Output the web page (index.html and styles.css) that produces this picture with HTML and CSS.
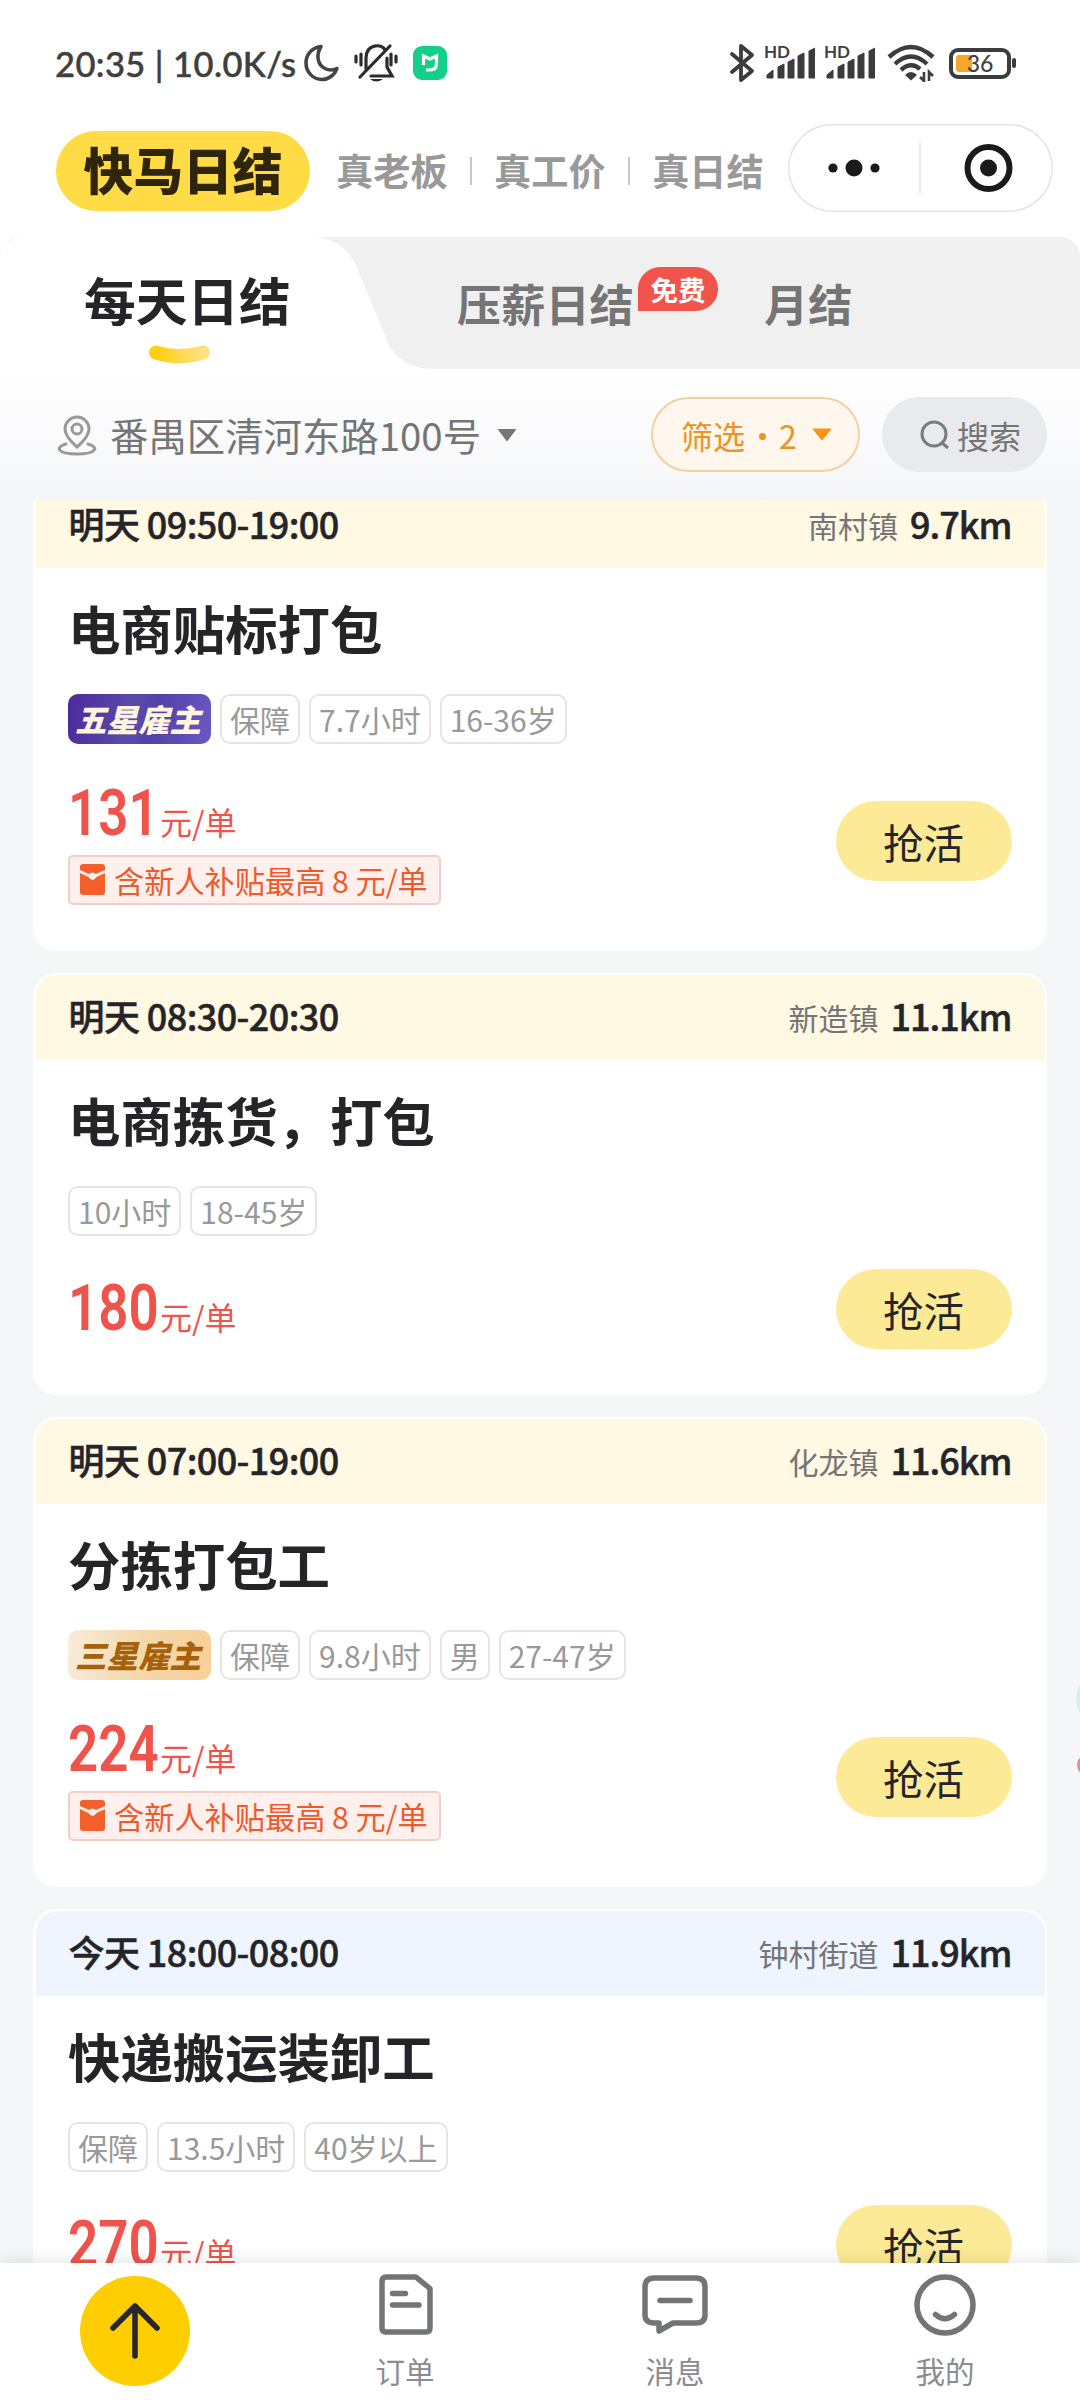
FILE: index.html
```html
<!DOCTYPE html>
<html lang="zh-CN">
<head>
<meta charset="utf-8">
<title>快马日结</title>
<link rel="stylesheet" href="styles.css">
</head>
<body>
<svg class="defs" width="0" height="0">
  <symbol id="envelope" viewBox="0 0 25 31">
    <path d="M3 0H22Q25 0 25 3V6L16 10Q12.500 7 9 10L0 6V3Q0 0 3 0z" fill="#f4602c"/>
    <path d="M0 9L8.500 13Q12.500 19 16.500 13L25 9V28Q25 31 22 31H3Q0 31 0 28z" fill="#f4602c"/>
  </symbol>
</svg>
<div class="screen">
  <header class="status">
    <span class="clock">20:35 | 10.0K/s</span>
    <svg class="moon" width="36" height="38" viewBox="0 0 36 38"><path d="M17 2.500C7 4 2 11 2 19c0 9 7 16.500 16 16.500 7 0 13-5 15-11-4 2-8 2-12 0-8-4-9-14-4-22z" fill="none" stroke="#444" stroke-width="3.600" stroke-linejoin="round"/></svg>
    <svg class="bell" width="44" height="40" viewBox="0 0 44 40"><g fill="none" stroke="#2c2c2c" stroke-width="3.200" stroke-linecap="round"><path d="M12 26V15C12 1 28 0 31 7M36 3L6 34M33 15V24L38 33H17M2 13V19M7 11V22M37 11V22M42 13V19"/></g><path d="M16 36H29Q22 41 16 36z" fill="#2c2c2c"/></svg>
    <svg class="mi" width="34" height="34" viewBox="0 0 34 34"><rect width="34" height="34" rx="9" fill="#14cf8c"/><path d="M10.500 19V10L17 13L23.500 10V18Q23.500 24 17 24H13" fill="none" stroke="#fff" stroke-width="3.200"/></svg>
    <span class="grow"></span>
    <svg class="bt" width="26" height="40" viewBox="0 0 26 40"><path d="M3 11L23 28 12 37V3L23 12 3 29" fill="none" stroke="#3c3c3c" stroke-width="3.800" stroke-linejoin="round" stroke-linecap="round"/></svg>
    <span class="sim"><b>HD</b><svg width="50" height="36" viewBox="0 0 50 36"><path d="M2 33V30L8 25V33zM13 33V22L19 19V33zM23 33V17L29 14V33zM33 33V11L39 8V33zM44 33V6L50 3V33z" fill="#3c3c3c" stroke="#3c3c3c" stroke-linejoin="round"/></svg></span>
    <span class="sim"><b>HD</b><svg width="50" height="36" viewBox="0 0 50 36"><path d="M2 33V30L8 25V33zM13 33V22L19 19V33zM23 33V17L29 14V33zM33 33V11L39 8V33zM44 33V6L50 3V33z" fill="#3c3c3c" stroke="#3c3c3c" stroke-linejoin="round"/></svg></span>
    <svg class="wifi" width="48" height="38" viewBox="0 0 48 38"><g fill="none" stroke="#3c3c3c" stroke-width="4.400"><path d="M2 13Q24 -7 46 13M8 20Q24 5 40 20M14 26Q24 17 33 25"/></g><path d="M18 31Q24 25 30 31L24 36.500z" fill="#3c3c3c"/><path d="M33 33L37 37V28M46 32L42 28V37" fill="none" stroke="#3c3c3c" stroke-width="2.600"/></svg>
    <span class="battery"><i></i><em>36</em></span>
  </header>

  <div class="brand">
    <div class="logo">快马日结</div>
    <div class="slogans"><span>真老板</span><i></i><span>真工价</span><i></i><span>真日结</span></div>
    <div class="capsule">
      <svg width="265" height="88" viewBox="0 0 265 88"><g fill="#1a1a1a"><circle cx="45" cy="44" r="4.600"/><circle cx="66" cy="44" r="8.500"/><circle cx="87" cy="44" r="4.600"/><circle cx="200.500" cy="44" r="8.500"/></g><path d="M132 18V69" stroke="#e4e4e4" stroke-width="1.500"/><circle cx="200.500" cy="44" r="21" fill="none" stroke="#1a1a1a" stroke-width="6"/></svg>
    </div>
  </div>

  <nav class="tabs">
    <svg class="tab-shape" width="440" height="132" viewBox="0 0 440 132"><path d="M0 132V18Q3 3 20 0H315C338 2 350 14 357 31L388 106Q399 130 431 132z" fill="#fff"/></svg>
    <div class="tab active">每天日结<svg width="61" height="21" viewBox="0 0 61 21"><defs><linearGradient id="smile"><stop offset="0" stop-color="#ffcf10"/><stop offset="1" stop-color="#ffe183"/></linearGradient></defs><path d="M7 7.500Q30 15 54 7.500" fill="none" stroke="url(#smile)" stroke-width="14" stroke-linecap="round"/></svg></div>
    <div class="tab second">压薪日结<span class="free">免费</span></div>
    <div class="tab third">月结</div>
  </nav>

  <div class="filters">
    <svg class="pin" width="40" height="41" viewBox="0 0 40 41"><g fill="none" stroke="#999" stroke-width="3"><path d="M20 32C12 25 8 20 8 14a12 12 0 0 1 24 0C32 20 28 25 20 32z"/><circle cx="20" cy="14" r="5"/><path d="M9 29C-2 32 0 39 20 39S42 32 31 29" stroke-linecap="round"/></g></svg>
    <span class="address">番禺区清河东路100号</span>
    <svg class="caret" width="20" height="13" viewBox="0 0 20 13"><path d="M1 0H19L10 12z" fill="#777" stroke="#777" stroke-linejoin="round"/></svg>
    <span class="grow"></span>
    <div class="pill filter"><span>筛选</span><i></i><span>2</span><svg width="20" height="13" viewBox="0 0 20 13"><path d="M1 1H19L10 12z" fill="#fa9314" stroke="#fa9314" stroke-linejoin="round"/></svg></div>
    <div class="pill search"><svg width="30" height="30" viewBox="0 0 30 30"><g fill="none" stroke="#7a7b80" stroke-width="3"><circle cx="14" cy="14" r="12"/><path d="M21 22L28 28"/></g></svg><span>搜索</span></div>
  </div>

  <main class="list">
    <article class="card cut">
      <div class="head"><b class="time">明天 09:50-19:00</b><span class="place">南村镇</span><b class="km">9.7km</b></div>
      <div class="body">
        <h2>电商贴标打包</h2>
        <div class="tags"><span class="star five">五星雇主</span><span>保障</span><span>7.7小时</span><span>16-36岁</span></div>
        <div class="foot"><div class="pay"><div class="price"><span class="num"><b>131</b></span>元/单</div><div class="bonus"><svg width="25" height="31"><use href="#envelope"/></svg>含新人补贴最高 8 元/单</div></div><div class="grab">抢活</div></div>
      </div>
    </article>
    <article class="card">
      <div class="head"><b class="time">明天 08:30-20:30</b><span class="place">新造镇</span><b class="km">11.1km</b></div>
      <div class="body">
        <h2>电商拣货，打包</h2>
        <div class="tags"><span>10小时</span><span>18-45岁</span></div>
        <div class="foot short"><div class="price"><span class="num"><b>180</b></span>元/单</div><div class="grab">抢活</div></div>
      </div>
    </article>
    <article class="card">
      <div class="head"><b class="time">明天 07:00-19:00</b><span class="place">化龙镇</span><b class="km">11.6km</b></div>
      <div class="body">
        <h2>分拣打包工</h2>
        <div class="tags"><span class="star three">三星雇主</span><span>保障</span><span>9.8小时</span><span>男</span><span>27-47岁</span></div>
        <div class="foot"><div class="pay"><div class="price"><span class="num"><b>224</b></span>元/单</div><div class="bonus"><svg width="25" height="31"><use href="#envelope"/></svg>含新人补贴最高 8 元/单</div></div><div class="grab">抢活</div></div>
      </div>
    </article>
    <article class="card today">
      <div class="head"><b class="time">今天 18:00-08:00</b><span class="place">钟村街道</span><b class="km">11.9km</b></div>
      <div class="body">
        <h2>快递搬运装卸工</h2>
        <div class="tags"><span>保障</span><span>13.5小时</span><span>40岁以上</span></div>
        <div class="foot short"><div class="price"><span class="num"><b>270</b></span>元/单</div><div class="grab">抢活</div></div>
      </div>
    </article>
  </main>

  <div class="floater"><i class="mint"></i><i class="rose"></i></div>

  <footer class="nav">
    <div class="item"><svg class="up" width="110" height="110" viewBox="0 0 110 110"><circle cx="55" cy="55" r="55" fill="#ffce00"/><path d="M55 80V30M33 52L55 30L77 52" fill="none" stroke="#26262b" stroke-width="5.600" stroke-linecap="round" stroke-linejoin="round"/></svg></div>
    <div class="item"><svg width="66" height="64" viewBox="0 0 66 64"><g fill="none" stroke="#737477" stroke-width="5.500" stroke-linejoin="round" stroke-linecap="round"><path d="M14 4H44L58 15.500V55Q58 59 54 59H14Q10 59 10 55V9Q10 4 14 4z"/><path d="M20.500 20.500H33.500M20.500 32H47"/></g></svg><span>订单</span></div>
    <div class="item"><svg width="66" height="64" viewBox="0 0 66 64"><g fill="none" stroke="#737477" stroke-width="5.500" stroke-linejoin="round" stroke-linecap="round"><path d="M12 5H54Q63 5 63 14V42Q63 50 54 50H31L17 58V50H12Q3 50 3 42V14Q3 5 12 5z"/><path d="M18 27.500H48"/></g></svg><span>消息</span></div>
    <div class="item"><svg width="66" height="64" viewBox="0 0 66 64"><g fill="none" stroke="#737477" stroke-width="5.500" stroke-linecap="round"><circle cx="33" cy="32" r="28"/><path d="M23.500 41.500Q33 50 42.500 41.500"/></g></svg><span>我的</span></div>
  </footer>
</div>
</body>
</html>
```
FILE: styles.css
```css
* { box-sizing: border-box; }
body {
  margin: 0;
  background: #f5f6f8;
  font-family: "Noto Sans CJK SC", sans-serif;
  color: #252529;
}
.defs { display: block; height: 0; }
i, em { font-style: normal; }
svg { display: block; flex: none; }
.grow { flex: 1; }
.screen {
  position: relative;
  width: 1080px;
  height: 2400px;
  overflow: hidden;
  display: flex;
  flex-direction: column;
  white-space: nowrap;
}

/* status bar */
.status {
  flex: none;
  height: 124px;
  background: #fff;
  display: flex;
  align-items: center;
  padding: 2px 69px 0 55px;
  color: #3f3f3f;
}
.clock { width: 248px; font: 500 34.500px "Lato", sans-serif; letter-spacing: .4px; -webkit-text-stroke: .5px #3f3f3f; }
.moon { margin-left: 1px; }
.bell { margin-left: 14px; }
.mi { margin-left: 15px; }
.bt { margin-right: 10px; }
.sim { position: relative; width: 60px; display: flex; justify-content: flex-start; }
.sim svg { margin-left: 0; }
.sim b { position: absolute; left: -1px; top: -5px; font: 700 17px/24px "Lato", sans-serif; }
.wifi { margin: 0 14px 0 2px; }
.battery {
  position: relative;
  width: 62px;
  height: 31px;
  border: 4px solid #3c3c3c;
  border-radius: 9px;
  display: flex;
  align-items: center;
  justify-content: center;
}
.battery::after {
  content: "";
  position: absolute;
  right: -9px;
  top: 6px;
  width: 4px;
  height: 10px;
  border-radius: 2px;
  background: #3c3c3c;
}
.battery i { position: absolute; left: 3px; top: 3px; width: 16px; height: 17px; border-radius: 3px; background: #f6a72b; }
.battery em { position: relative; font: 500 23px/23px "Lato", sans-serif; }

/* brand row */
.brand {
  flex: none;
  height: 113px;
  background: #fff;
  display: flex;
  align-items: flex-start;
  padding-left: 56px;
}
.logo {
  margin-top: 7px;
  width: 254px;
  height: 80px;
  border-radius: 40px;
  background: #ffdb45;
  color: #2e250c;
  font-size: 49.800px;
  font-weight: 900;
  line-height: 74px;
  text-align: center;
}
.slogans { margin: 19px 0 0 26px; display: flex; align-items: center; color: #999; font-size: 37.200px; font-weight: 700; line-height: 55px; width: 452px; }
.slogans i { width: 2px; height: 28px; margin: 0 22px 0 22.500px; background: #c8c8c8; }
.capsule { width: 265px; height: 88px; border-radius: 44px; box-shadow: inset 0 0 0 1.500px #e4e4e4; }

/* tabs */
.tabs {
  flex: none;
  position: relative;
  height: 132px;
  background: #f0f0f0;
  border-radius: 20px 20px 0 0;
  display: flex;
  align-items: flex-start;
  box-shadow: 0 -20px 0 #fff;
}
.tab-shape { position: absolute; left: 0; top: 0; }
.tab { position: relative; flex: none; font-weight: 700; font-size: 44.200px; line-height: 64px; color: #757575; padding-top: 34px; }
.tab.active { width: 373px; padding-left: 84px; margin-right: 84px; padding-top: 26px; font-size: 51.700px; line-height: 72px; color: #252529; }
.tab.active svg { margin: 10px 0 0 65px; }
.tab.second { width: 307px; }
.free {
  position: absolute;
  left: 181px;
  top: 30px;
  width: 80px;
  height: 44px;
  border-radius: 22px 22px 22px 0;
  background: #f1544b;
  color: #fff;
  font-size: 27.500px;
  line-height: 45px;
  text-align: center;
}

/* filter row */
.filters {
  flex: none;
  height: 131px;
  background: linear-gradient(#fff, #f5f6f9);
  display: flex;
  align-items: flex-start;
  padding: 28px 33px 0 57px;
  color: #757575;
}
.pin { margin: 18px 13px 0 0; }
.address { font-size: 38.400px; line-height: 56px; margin-top: 9px; }
.caret { margin: 32px 0 0 16px; }
.pill { height: 75px; border-radius: 38px; display: flex; align-items: center; font-size: 32px; line-height: 46px; }
.filter { width: 209px; padding-left: 28px; border: 2px solid #f4cf9f; background: #fff7ed; color: #ee9220; margin-right: 22px; }
.filter i { width: 7px; height: 7px; border-radius: 50%; background: #ee9220; margin: 3px 13.500px 0; }
.filter svg { margin-left: 15px; }
.search { width: 165px; padding-left: 38px; background: #e9eaee; gap: 7px; }

/* job cards */
.list { flex: 1; min-height: 0; overflow: hidden; padding: 0 33px; }
.card { height: 422px; margin-bottom: 22px; border-radius: 24px; background: #fff; padding: 2.500px; }
.card:has(.bonus) { height: 470px; }
.card.cut { margin-top: -19.500px; }
.head {
  height: 85px;
  border-radius: 22px 22px 0 0;
  background: #fff8e3;
  display: flex;
  align-items: center;
  padding: 0 33px 5px 33px;
}
.today .head { background: #eff5ff; }
.time, .km { font-size: 36px; font-weight: 500; letter-spacing: -.6px; -webkit-text-stroke: .5px #252529; }
.km { letter-spacing: -1px; }
.place { margin: 3px 12px 0 auto; font-size: 30px; color: #757575; }
.body { padding: 21px 33px 0 32.500px; }
h2 { margin: 0; font-size: 52.400px; line-height: 76px; font-weight: 700; }
.tags { display: flex; gap: 9px; margin-top: 29px; }
.tags span { height: 50px; border: 2px solid #e5e5e5; border-radius: 10px; padding: 0 8px; font-size: 30px; line-height: 46px; color: #999; }
.tags .star { width: 143px; border: 0; padding: 0; text-align: center; font-size: 31.500px; text-indent: -3px; font-weight: 900; font-style: italic; line-height: 48px; }
.five { background: linear-gradient(100deg, #4c2a9d, #5a4ba9 45%, #5340a8 60%, #6a58c4); }
.tags .five { color: #fff5dc; }
.three { background: linear-gradient(100deg, #f8ecdc, #f3d9aa 50%, #f9cf96); }
.tags .three { color: #a5620a; }
.foot { display: flex; justify-content: space-between; align-items: flex-start; margin-top: 36.500px; height: 123px; }
.foot .grab { margin-top: 20px; }
.pay { padding-top: 3px; }
.foot.short { margin-top: 32.500px; height: 80px; align-items: center; }
.foot.short .grab { margin-top: 0; }
.price { display: flex; align-items: flex-end; height: 60px; font-size: 32px; line-height: 46px; color: #f0534b; }
.num { width: 92px; height: 60px; font: 64.500px/58px "Roboto", sans-serif; }
.num b { display: inline-block; font-weight: 600; transform: scaleX(.82); transform-origin: 0 50%; }
.bonus {
  width: 373px;
  height: 50px;
  margin-top: 11px;
  border: 2px solid #f5cdc4;
  border-radius: 5px;
  background: #fff0ee;
  color: #ed5b2d;
  font-size: 30.200px;
  display: flex;
  align-items: center;
  gap: 9px;
  padding-left: 10px;
}
.grab { width: 176px; height: 80px; border-radius: 40px; background: #fdea97; font-size: 40.500px; line-height: 81px; text-align: center; }

/* floating promo peeking in from the right edge */
.floater { position: absolute; right: -34px; top: 1676px; width: 38px; height: 104px; }
.floater i { position: absolute; border-radius: 50%; }
.mint { left: 0; top: 0; width: 38px; height: 46px; background: #d3f1f3; }
.rose { left: 1px; top: 76px; width: 30px; height: 26px; background: #f0859f; }

/* bottom navigation */
.nav {
  flex: none;
  position: relative;
  height: 137px;
  background: #fff;
  box-shadow: 0 -2px 16px rgba(0, 0, 0, .1);
  display: grid;
  grid-template-columns: repeat(4, 1fr);
}
.item { display: flex; flex-direction: column; align-items: center; padding-top: 10px; font-size: 29.500px; line-height: 42px; color: #8b8c90; }
.item span { margin-top: 12px; }
.up { margin-top: 3px; }
```
